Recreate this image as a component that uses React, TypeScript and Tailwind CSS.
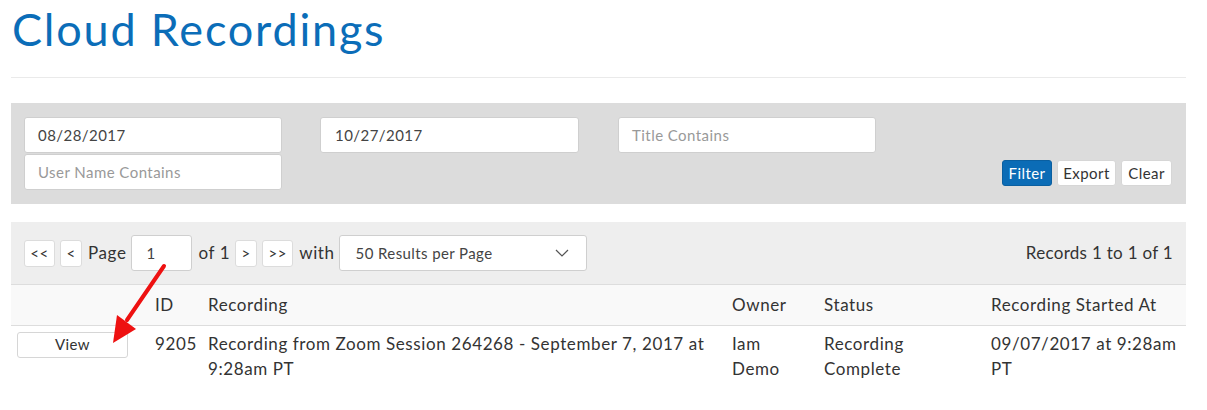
import React from "react";

const font = { fontFamily: "Lato, 'Open Sans', sans-serif" };

function PagerBtn({ children, w }: { children: React.ReactNode; w: string }) {
  return (
    <button
      className={`h-[27px] ${w} bg-white border border-[#dcdcdc] rounded-[3px] text-[15px] text-[#333] flex items-center justify-center tracking-[0.5px]`}
    >
      {children}
    </button>
  );
}

export default function App() {
  return (
    <div className="w-[1207px] h-[410px] bg-white relative overflow-hidden text-[#333]" style={font}>
      <div className="pl-[11px] pr-[21px]">
        <h1 className="text-[45px] leading-[52px] text-[#0b6db8] pt-[3px] pl-[1px] tracking-[1.8px]">Cloud Recordings</h1>
        <div className="mt-[22px] border-t border-[#eaeaea]" />

        {/* filter panel */}
        <div className="mt-[25px] h-[101px] bg-[#dcdcdc] pl-[13px] pr-[14px] pt-[14px] flex text-[15px] tracking-[0.45px]">
          <div className="flex flex-col gap-[1px]">
            <div className="w-[258px] h-[36px] bg-white border border-[#cfcfcf] rounded-[3px] flex items-center pl-[13px] text-[#444]">08/28/2017</div>
            <div className="w-[258px] h-[36px] bg-white border border-[#cfcfcf] rounded-[3px] flex items-center pl-[13px] text-[#999]">User Name Contains</div>
          </div>
          <div className="ml-[38px] w-[259px] h-[36px] bg-white border border-[#cfcfcf] rounded-[3px] flex items-center pl-[14px] text-[#444]">10/27/2017</div>
          <div className="ml-[39px] w-[258px] h-[36px] bg-white border border-[#cfcfcf] rounded-[3px] flex items-center pl-[13px] text-[#999]">Title Contains</div>
          <div className="ml-auto self-start mt-[43px] flex gap-[5px]">
            <button className="h-[26px] w-[50px] bg-[#0b6cb6] border border-[#0a5fa0] rounded-[3px] text-white flex items-center justify-center">Filter</button>
            <button className="h-[26px] w-[59px] bg-white border border-[#d6d6d6] rounded-[3px] text-[#333] flex items-center justify-center">Export</button>
            <button className="h-[26px] w-[51px] bg-white border border-[#d6d6d6] rounded-[3px] text-[#333] flex items-center justify-center">Clear</button>
          </div>
        </div>

        {/* pager */}
        <div className="mt-[18px] h-[63px] bg-[#eeeeee] border-b border-[#dddddd] flex items-center pl-[13px] pr-[13px] text-[17px] tracking-[0.6px]">
          <div className="flex items-center">
            <PagerBtn w="w-[31px]">&lt;&lt;</PagerBtn>
            <div className="ml-[5px]"><PagerBtn w="w-[22px]">&lt;</PagerBtn></div>
            <span className="ml-[6px] text-[#333]">Page</span>
            <div className="ml-[5px] shrink-0 w-[61px] h-[36px] bg-white border border-[#cfcfcf] rounded-[3px] flex items-center pl-[14px] text-[15px] text-[#444]">1</div>
            <span className="ml-[6px] text-[#333]">of 1</span>
            <div className="ml-[5px]"><PagerBtn w="w-[22px]">&gt;</PagerBtn></div>
            <div className="ml-[5px]"><PagerBtn w="w-[31px]">&gt;&gt;</PagerBtn></div>
            <span className="ml-[6px] text-[#333]">with</span>
            <div className="ml-[4px] shrink-0 w-[248px] h-[36px] bg-white border border-[#cfcfcf] rounded-[3px] flex items-center pl-[16px] pr-[17px] text-[15px] tracking-[0.4px] text-[#444]">
              <span>50 Results per Page</span>
              <svg className="ml-auto" width="14" height="8" viewBox="0 0 14 8" fill="none" stroke="#555" strokeWidth="1.2">
                <path d="M1 1l6 6 6-6" />
              </svg>
            </div>
          </div>
          <span className="ml-auto text-[#333] tracking-[0.3px]">Records 1 to 1 of 1</span>
        </div>

        {/* table */}
        <table className="w-[1175px] border-collapse table-fixed text-[17px] tracking-[0.6px] text-[#333]">
          <colgroup>
            <col className="w-[136px]" />
            <col className="w-[53px]" />
            <col className="w-[524px]" />
            <col className="w-[92px]" />
            <col className="w-[167px]" />
            <col className="w-[203px]" />
          </colgroup>
          <thead>
            <tr className="bg-[#f9f9f9] border-b border-[#dddddd] h-[40px]">
              <th className="font-normal text-left" />
              <th className="font-normal text-left pl-[8px]">ID</th>
              <th className="font-normal text-left pl-[8px]">Recording</th>
              <th className="font-normal text-left pl-[8px]">Owner</th>
              <th className="font-normal text-left pl-[8px]">Status</th>
              <th className="font-normal text-left pl-[8px]">Recording Started At</th>
            </tr>
          </thead>
          <tbody>
            <tr className="align-top leading-[25px]">
              <td className="pl-[6px] pt-[6px]">
                <button className="w-[111px] h-[26px] bg-white border border-[#d6d6d6] rounded-[3px] text-[15px] tracking-[0.4px] text-[#333] flex items-center justify-center">View</button>
              </td>
              <td className="pl-[8px] pt-[5px]">9205</td>
              <td className="pl-[8px] pt-[5px] pr-[8px]">Recording from Zoom Session 264268 - September 7, 2017 at 9:28am PT</td>
              <td className="pl-[8px] pt-[5px] pr-[8px]">Iam Demo</td>
              <td className="pl-[8px] pt-[5px] pr-[8px]">Recording Complete</td>
              <td className="pl-[8px] pt-[5px] pr-[8px]">09/07/2017 at 9:28am PT</td>
            </tr>
          </tbody>
        </table>
      </div>

      {/* red annotation arrow */}
      <svg className="absolute left-0 top-0 pointer-events-none" width="1207" height="410">
        <line x1="164" y1="266" x2="127" y2="320" stroke="#ee1111" strokeWidth="4" strokeLinecap="round" />
        <polygon points="113,343 117,315 136,329" fill="#ee1111" />
      </svg>
    </div>
  );
}
